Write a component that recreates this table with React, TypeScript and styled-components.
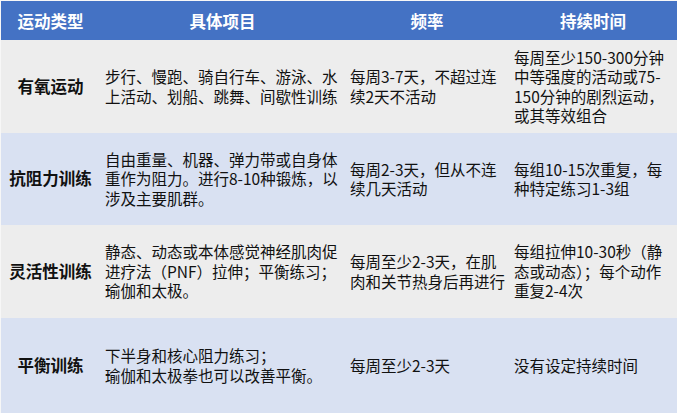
import React from 'react';
import styled, { createGlobalStyle } from 'styled-components';

const GlobalStyle = createGlobalStyle`
  html, body {
    margin: 0;
    padding: 0;
    background: #f7f7f7;
  }

  body {
    font-family: 'Noto Sans CJK SC', 'Noto Sans', sans-serif;
    color: #111;
  }
`;

const Table = styled.div`
  display: grid;
  grid-template-columns: 99px 245px 164px 168px;
  grid-template-rows: 39px 93px 92px 93px 95px;

  margin: 1px 0 0 1px;
  width: 676px;
`;

const HeaderCell = styled.div<{ align?: 'left' | 'center' }>`
  display: flex;
  align-items: center;
  justify-content: ${(props) => (props.align === 'left' ? 'flex-start' : 'center')};

  padding: 0 5px;

  background-color: #4472c4;
  color: #ffffff;
  font-size: 16.5px;
  font-weight: 700;
`;

const Cell = styled.div<{ shade: boolean; center?: boolean }>`
  display: flex;
  flex-direction: column;
  justify-content: center;
  align-items: ${(props) => (props.center ? 'center' : 'flex-start')};

  padding: 0 5px;

  background-color: ${(props) => (props.shade ? '#d9e1f2' : '#ededed')};
  font-size: ${(props) => (props.center ? '16.5px' : '15.5px')};
  font-weight: ${(props) => (props.center ? 700 : 400)};
  line-height: 19.5px;
  white-space: nowrap;
`;

interface Row {
  type: string;
  items: string[];
  frequency: string[];
  duration: string[];
}

const rows: Row[] = [
  {
    type: '有氧运动',
    items: ['步行、慢跑、骑自行车、游泳、水', '上活动、划船、跳舞、间歇性训练'],
    frequency: ['每周3-7天，不超过连', '续2天不活动'],
    duration: ['每周至少150-300分钟', '中等强度的活动或75-', '150分钟的剧烈运动，', '或其等效组合'],
  },
  {
    type: '抗阻力训练',
    items: ['自由重量、机器、弹力带或自身体', '重作为阻力。进行8-10种锻炼，以', '涉及主要肌群。'],
    frequency: ['每周2-3天，但从不连', '续几天活动'],
    duration: ['每组10-15次重复，每', '种特定练习1-3组'],
  },
  {
    type: '灵活性训练',
    items: ['静态、动态或本体感觉神经肌肉促', '进疗法（PNF）拉伸；平衡练习；', '瑜伽和太极。'],
    frequency: ['每周至少2-3天，在肌', '肉和关节热身后再进行'],
    duration: ['每组拉伸10-30秒（静', '态或动态）；每个动作', '重复2-4次'],
  },
  {
    type: '平衡训练',
    items: ['下半身和核心阻力练习；', '瑜伽和太极拳也可以改善平衡。'],
    frequency: ['每周至少2-3天'],
    duration: ['没有设定持续时间'],
  },
];

const Lines = ({ lines }: { lines: string[] }) => (
  <>
    {lines.map((line) => (
      <span key={line}>{line}</span>
    ))}
  </>
);

export default function App() {
  return (
    <>
      <GlobalStyle />
      <Table>
        <HeaderCell>运动类型</HeaderCell>
        <HeaderCell>具体项目</HeaderCell>
        <HeaderCell>频率</HeaderCell>
        <HeaderCell>持续时间</HeaderCell>
        {rows.map((row, i) => {
          const shade = i % 2 === 1;
          return (
            <React.Fragment key={row.type}>
              <Cell shade={shade} center>
                {row.type}
              </Cell>
              <Cell shade={shade}>
                <Lines lines={row.items} />
              </Cell>
              <Cell shade={shade}>
                <Lines lines={row.frequency} />
              </Cell>
              <Cell shade={shade}>
                <Lines lines={row.duration} />
              </Cell>
            </React.Fragment>
          );
        })}
      </Table>
    </>
  );
}
